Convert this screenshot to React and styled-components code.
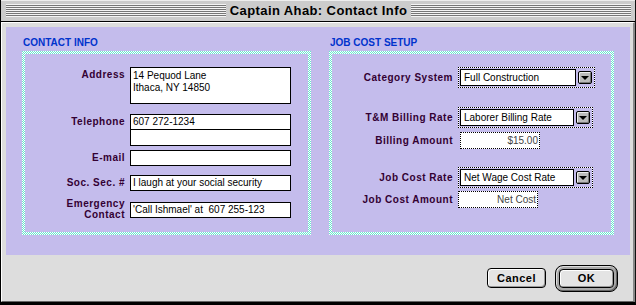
import React from 'react';
import styled, { createGlobalStyle } from 'styled-components';

const GlobalStyle = createGlobalStyle`
  html, body { margin: 0; padding: 0; background: #ddd; }
  body { font-family: "Liberation Sans", Arial, sans-serif; }
`;

const Window = styled.div`
  width: 636px;
  height: 305px;
  box-sizing: border-box;
  display: flex;
  flex-direction: column;
  background: #dddddd;
  border-left: 1px solid #000;
  border-right: 1px solid #111;
  border-bottom: 3px solid #000;
`;

const TitleBar = styled.div`
  flex: none;
  height: 21px;
  display: flex;
  align-items: center;
  gap: 3px;
  padding: 0 4px 0 5px;
  background: #cccccc;
  border-bottom: 1px solid #000;
  box-shadow: inset 0 1px #eeeeee;
`;

const Stripes = styled.div`
  flex: 1;
  height: 13px;
  background: repeating-linear-gradient(to bottom, #f4f4f4 0 1px, #777 1px 2px);
`;

const Title = styled.div`
  font-size: 13px;
  font-weight: bold;
  letter-spacing: 0.4px;
  line-height: 14px;
  white-space: nowrap;
  color: #000;
  padding: 0 1px;
`;

const Body = styled.div`
  flex: 1;
  display: flex;
  flex-direction: column;
  border-top: 1px solid #fff;
  border-left: 1px solid #fff;
  border-right: 2px solid #888;
  border-bottom: 1px solid #666;
  padding: 4px 3px 0 4px;
`;

const Panel = styled.div`
  flex: none;
  height: 228px;
  box-sizing: border-box;
  background: #c4bcec;
  display: grid;
  grid-template-columns: 289px 285px;
  column-gap: 18px;
  padding: 10px 16px 0 16px;
`;

const Column = styled.div`
  display: flex;
  flex-direction: column;
`;

const Heading = styled.div`
  font-size: 10px;
  font-weight: bold;
  line-height: 12px;
  color: #0033cc;
  margin: 0 0 2px 1px;
`;

// 1px checkerboard of aqua and white: stripes XORed by difference, then screened with aqua
const Frame = styled.div`
  height: 184px;
  box-sizing: border-box;
  padding: 3px;
  background-color: #000;
  background-image:
    linear-gradient(#66e6cc, #66e6cc),
    repeating-linear-gradient(to right, #000 0 1px, #fff 1px 2px),
    repeating-linear-gradient(to bottom, #000 0 1px, #fff 1px 2px);
  background-blend-mode: screen, difference, difference;
`;

const FrameInner = styled.div`
  height: 100%;
  box-sizing: border-box;
  background: #c4bcec;
  padding-top: 13px;
`;

const Row = styled.div`
  display: flex;
  align-items: ${p => p.$align || 'flex-start'};
  margin-top: ${p => p.$mt || 0}px;
`;

const Label = styled.div`
  flex: none;
  width: ${p => p.$w}px;
  margin-right: 5px;
  text-align: right;
  font-size: 10px;
  font-weight: bold;
  letter-spacing: 0.5px;
  color: #330033;
  line-height: ${p => (p.$two ? 11 : 16)}px;
  margin-top: ${p => (p.$two ? -4 : 0)}px;
`;

const Field = styled.div`
  box-sizing: border-box;
  width: ${p => p.$w || 161}px;
  height: ${p => p.$h || 16}px;
  background: #fff;
  border: 1px solid #000;
  padding: ${p => (p.$multi ? '2px 2px' : '0 2px')};
  font-size: 10px;
  line-height: ${p => (p.$multi ? 12 : 14)}px;
  color: #000;
  white-space: pre;
  overflow: hidden;
`;

const Stack = styled.div`
  display: flex;
  flex-direction: column;
  & > * + * { margin-top: -1px; }
`;

const Popup = styled.div`
  display: flex;
  align-items: center;
  gap: 2px;
  padding: 1px 2px 1px 1px;
  border: 1px dotted #000;
  background: linear-gradient(#c4bcec, #c4bcec) padding-box, #fff border-box;
`;

const PopupField = styled.div`
  box-sizing: border-box;
  width: ${p => p.$w}px;
  height: 17px;
  background: #fff;
  border: 1px solid #000;
  padding: 1px 3px 0;
  font-size: 10px;
  line-height: 14px;
  white-space: nowrap;
  color: #000;
`;

const Arrow = styled.div`
  box-sizing: border-box;
  width: 14px;
  height: 13px;
  background: #bbbbbb;
  border: 1px solid #000;
  border-radius: 2px;
  box-shadow: inset 1px 1px #eee, inset -1px -1px #777;
  display: flex;
  align-items: center;
  justify-content: center;
  &::after {
    content: '';
    width: 0;
    height: 0;
    border-left: 4px solid transparent;
    border-right: 4px solid transparent;
    border-top: 4px solid #000;
    margin-top: 1px;
  }
`;

const Amount = styled.div`
  box-sizing: border-box;
  width: 80px;
  height: 17px;
  margin-left: ${p => p.$ml || 0}px;
  border: 1px dotted #000;
  background: #fff;
  text-align: right;
  padding-right: 1px;
  font-size: 10px;
  line-height: 15px;
  color: #444;
`;

const Footer = styled.div`
  flex: 1;
  display: flex;
  justify-content: flex-end;
  align-items: center;
  gap: 9px;
  padding-right: 12px;
`;

const Button = styled.button`
  box-sizing: border-box;
  width: ${p => p.$w || 59}px;
  height: ${p => p.$h || 20}px;
  margin: 0;
  padding: 0;
  border: 1px solid #000;
  border-radius: 4px;
  background: #e4e4e4;
  box-shadow: inset 1px 1px #fff, inset -1px -1px #999;
  font-family: "Liberation Sans", Arial, sans-serif;
  font-size: 11px;
  font-weight: bold;
  letter-spacing: 0.5px;
  color: #000;
`;

const DefaultRing = styled.div`
  box-sizing: border-box;
  width: 63px;
  height: 27px;
  padding: 3px;
  border: 1px solid #000;
  border-radius: 8px;
  background: #a8a8a8;
  box-shadow: inset 1px 1px #ddd, inset -1px -1px #666;
  display: flex;
`;

export default function App() {
  return (
    <>
      <GlobalStyle />
      <Window>
        <TitleBar>
          <Stripes />
          <Title>Captain Ahab: Contact Info</Title>
          <Stripes />
        </TitleBar>
        <Body>
          <Panel>
            <Column>
              <Heading>CONTACT INFO</Heading>
              <Frame>
                <FrameInner>
                  <Row>
                    <Label $w={100}>Address</Label>
                    <Field $h={37} $multi>{'14 Pequod Lane\nIthaca, NY 14850'}</Field>
                  </Row>
                  <Row $mt={10}>
                    <Label $w={100}>Telephone</Label>
                    <Stack>
                      <Field>607 272-1234</Field>
                      <Field $h={17} />
                    </Stack>
                  </Row>
                  <Row $mt={4}>
                    <Label $w={100}>E-mail</Label>
                    <Field />
                  </Row>
                  <Row $mt={9}>
                    <Label $w={100}>Soc. Sec. #</Label>
                    <Field>I laugh at your social security</Field>
                  </Row>
                  <Row $mt={11}>
                    <Label $w={100} $two>Emergency<br />Contact</Label>
                    <Field>'Call Ishmael' at  607 255-123</Field>
                  </Row>
                </FrameInner>
              </Frame>
            </Column>
            <Column>
              <Heading>JOB COST SETUP</Heading>
              <Frame>
                <FrameInner>
                  <Row $align="center">
                    <Label $w={121}>Category System</Label>
                    <Popup>
                      <PopupField $w={116}>Full Construction</PopupField>
                      <Arrow />
                    </Popup>
                  </Row>
                  <Row $align="center" $mt={19}>
                    <Label $w={121}>T&amp;M Billing Rate</Label>
                    <Popup>
                      <PopupField $w={114}>Laborer Billing Rate</PopupField>
                      <Arrow />
                    </Popup>
                  </Row>
                  <Row $align="center" $mt={4}>
                    <Label $w={121}>Billing Amount</Label>
                    <Amount $ml={2}>$15.00</Amount>
                  </Row>
                  <Row $align="center" $mt={18}>
                    <Label $w={121}>Job Cost Rate</Label>
                    <Popup>
                      <PopupField $w={114}>Net Wage Cost Rate</PopupField>
                      <Arrow />
                    </Popup>
                  </Row>
                  <Row $align="center" $mt={3}>
                    <Label $w={121}>Job Cost Amount</Label>
                    <Amount>Net Cost</Amount>
                  </Row>
                </FrameInner>
              </Frame>
            </Column>
          </Panel>
          <Footer>
            <Button>Cancel</Button>
            <DefaultRing>
              <Button $w={55} $h={19}>OK</Button>
            </DefaultRing>
          </Footer>
        </Body>
      </Window>
    </>
  );
}
